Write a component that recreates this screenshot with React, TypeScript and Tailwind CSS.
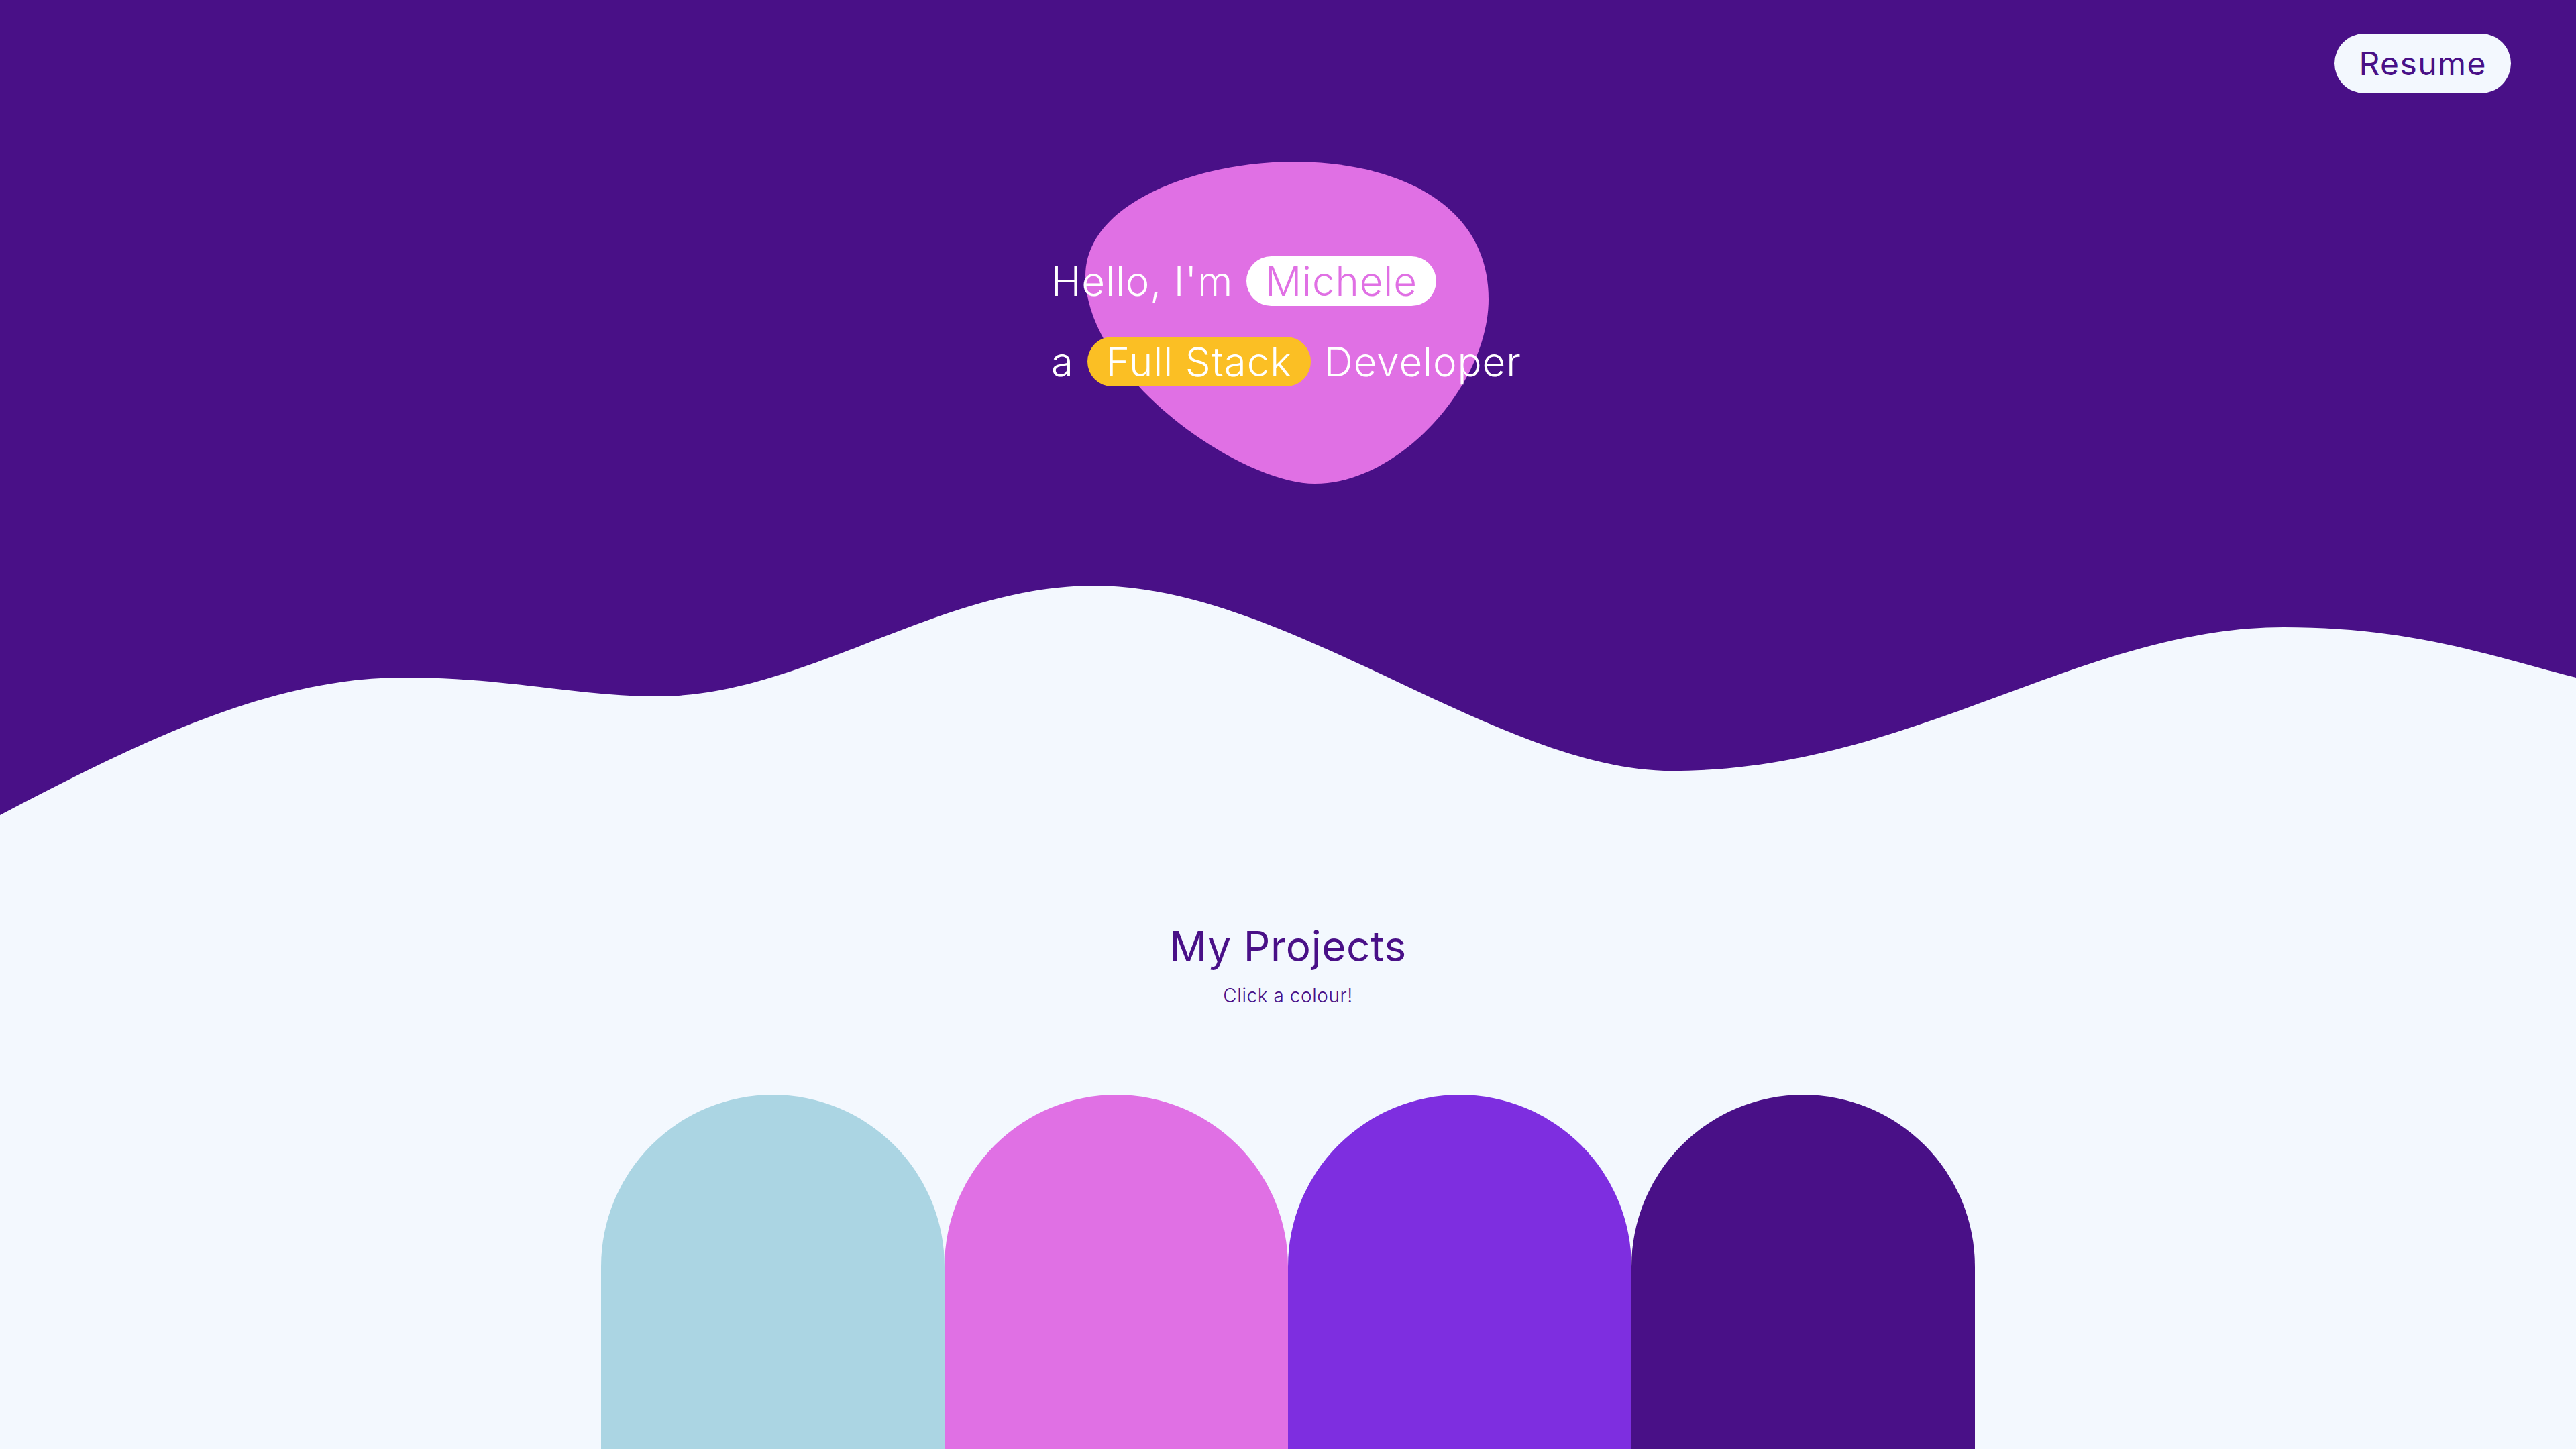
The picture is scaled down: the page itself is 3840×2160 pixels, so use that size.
import React from 'react';

// blob behind the intro, drawn in a 601x481 box
const blobD =
  'M 310 0 C 460 0 601 60 601 205 C 601 330 470 480 342 480 C 230 480 0 320 0 170 C 0 60 170 0 310 0 Z';

// hero wave, 3840x355 box, light part below the curve
const waveD =
  'M 0 355 C 200 250 400 150 600 150 C 760 150 860 178 980 178 C 1200 178 1400 13 1631 13 ' +
  'C 1920 13 2230 289 2493 289 C 2850 289 3100 75 3404 75 C 3600 75 3720 120 3840 150 L 3840 355 Z';

const projects = [
  { id: 'p1', color: 'bg-[#abd5e3]' },
  { id: 'p2', color: 'bg-[#e070e4]' },
  { id: 'p3', color: 'bg-[#7e2ee0]' },
  { id: 'p4', color: 'bg-[#491087]' },
];

const App = () => {
  return (
    <div className="min-h-screen bg-[#f3f8fe] font-['Inter','Noto_Sans',sans-serif] overflow-hidden">
      {/* Hero */}
      <header className="bg-[#491087] h-[1215px] flex flex-col">
        <div className="flex justify-end pt-[50px] pr-[97px]">
          <button className="h-[89px] px-[36px] rounded-full bg-[#f3f8fe] text-[#491087] text-[48px] tracking-[0.03em] leading-none">
            Resume
          </button>
        </div>

        <div className="flex justify-center mt-[220px]">
          <div className="relative w-[706px] text-white text-[60px] font-light tracking-[0.015em]">
            <svg
              className="absolute left-[51px] top-[-118px] w-[601px] h-[481px]"
              viewBox="0 0 601 481"
            >
              <path d={blobD} fill="#e070e4" />
            </svg>
            <div className="relative flex items-center gap-[20px] h-[120px] whitespace-nowrap">
              <span>Hello, I'm</span>
              <span className="bg-white text-[#e070e4] rounded-full px-[28px] h-[74px] flex items-center">Michele</span>
            </div>
            <div className="relative flex items-center gap-[20px] h-[120px] whitespace-nowrap">
              <span>a</span>
              <span className="bg-[#fbbf24] text-white rounded-full px-[28px] h-[74px] flex items-center">Full Stack</span>
              <span>Developer</span>
            </div>
          </div>
        </div>

        <svg className="mt-auto block w-full h-[355px]" viewBox="0 0 3840 355" preserveAspectRatio="none">
          <path d={waveD} fill="#f3f8fe" />
        </svg>
      </header>

      {/* Projects */}
      <section className="pt-[159px] flex flex-col items-center">
        <h2 className="text-[62px] leading-[1.2] tracking-[0.01em] text-[#491087]">My Projects</h2>
        <p className="mt-[15px] text-[28px] leading-[1.5] font-light tracking-[0.02em] text-[#491087]">Click a colour!</p>

        <div className="mt-[127px] flex">
          {projects.map((p) => (
            <button key={p.id} className={`w-[512px] h-[800px] rounded-t-full ${p.color}`} />
          ))}
        </div>
      </section>
    </div>
  );
};

export default App;
